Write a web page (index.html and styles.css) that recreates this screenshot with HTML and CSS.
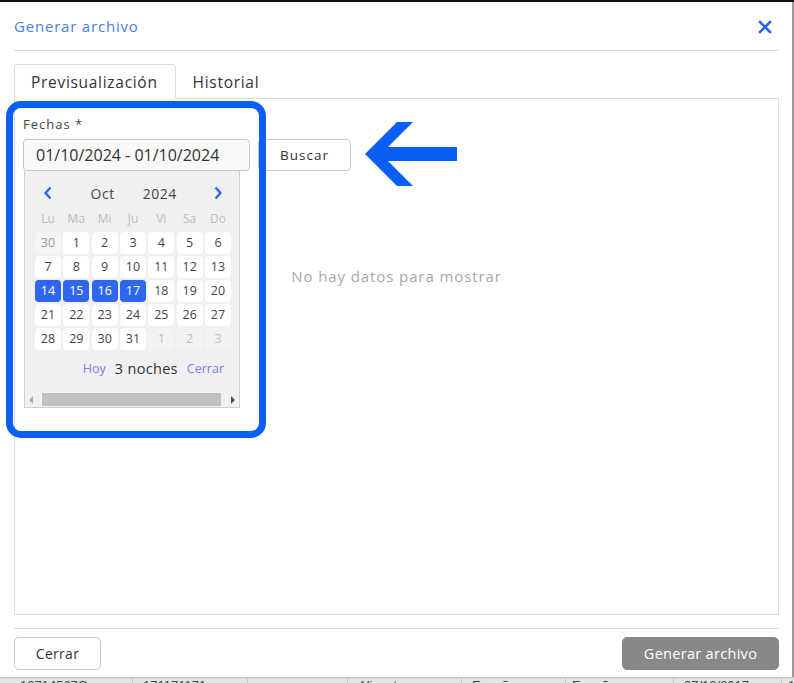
FILE: index.html
```html
<!DOCTYPE html>
<html lang="es">
<head>
<meta charset="utf-8">
<title>Generar archivo</title>
<link rel="stylesheet" href="styles.css">
</head>
<body>
<div class="topbar"></div>
<div class="modal">
  <div class="header">
    <span class="title">Generar archivo</span>
    <svg class="close" width="14" height="14" viewBox="0 0 14 14"><path d="M2 2 L12 12 M12 2 L2 12" stroke="#2a62ea" stroke-width="2.6" stroke-linecap="square"/></svg>
  </div>
  <div class="tabs">
    <div class="tab active">Previsualización</div>
    <div class="tab">Historial</div>
  </div>
  <div class="panel">
    <div class="form">
      <div class="field">
        <label class="label">Fechas *</label>
        <div class="row">
          <div class="input">01/10/2024 - 01/10/2024</div>
          <button class="btn">Buscar</button>
        </div>
        <div class="calendar">
          <div class="cal-head">
            <svg class="chev prev" width="10" height="14" viewBox="0 0 10 14"><path d="M7.5 1.5 L2.5 7 L7.5 12.5" fill="none" stroke="#2d66ee" stroke-width="2.4"/></svg>
            <span class="month">Oct</span>
            <span class="year">2024</span>
            <svg class="chev next" width="10" height="14" viewBox="0 0 10 14"><path d="M2.5 1.5 L7.5 7 L2.5 12.5" fill="none" stroke="#2d66ee" stroke-width="2.4"/></svg>
          </div>
          <div class="weekdays">
            <span>Lu</span><span>Ma</span><span>Mi</span><span>Ju</span><span>Vi</span><span>Sa</span><span>Do</span>
          </div>
          <div class="days">
            <span class="d prev-m">30</span><span class="d">1</span><span class="d">2</span><span class="d">3</span><span class="d">4</span><span class="d">5</span><span class="d">6</span>
            <span class="d">7</span><span class="d">8</span><span class="d">9</span><span class="d">10</span><span class="d">11</span><span class="d">12</span><span class="d">13</span>
            <span class="d sel">14</span><span class="d sel">15</span><span class="d sel">16</span><span class="d sel">17</span><span class="d">18</span><span class="d">19</span><span class="d">20</span>
            <span class="d">21</span><span class="d">22</span><span class="d">23</span><span class="d">24</span><span class="d">25</span><span class="d">26</span><span class="d">27</span>
            <span class="d">28</span><span class="d">29</span><span class="d">30</span><span class="d">31</span><span class="d next-m">1</span><span class="d next-m">2</span><span class="d next-m">3</span>
          </div>
          <div class="cal-foot">
            <span class="link">Hoy</span>
            <span class="nights">3 noches</span>
            <span class="link">Cerrar</span>
          </div>
          <div class="scrollbar">
            <svg class="sarrow" width="6" height="8" viewBox="0 0 6 8"><path d="M5 0 L1 4 L5 8 Z" fill="#a8a8a8"/></svg>
            <div class="thumb"></div>
            <svg class="sarrow" width="6" height="8" viewBox="0 0 6 8"><path d="M1 0 L5 4 L1 8 Z" fill="#505050"/></svg>
          </div>
        </div>
      </div>
    </div>
    <div class="empty">No hay datos para mostrar</div>
  </div>
  <div class="footer">
    <button class="btn btn-close">Cerrar</button>
    <button class="btn btn-primary">Generar archivo</button>
  </div>
  <div class="highlight"></div>
  <svg class="arrow" width="100" height="72" viewBox="0 0 100 72"><path d="M5 36 L37 4 L53 4 L28 29 L97 29 L97 43 L28 43 L53 68 L37 68 Z" fill="#0a5ff5"/></svg>
</div>
<div class="behind">
  <span class="c c1">12714567G</span>
  <span class="c c2">171171171</span>
  <span class="c c3"></span>
  <span class="c c4">Alicante</span>
  <span class="c c5">España</span>
  <span class="c c6">España</span>
  <span class="c c7">27/12/2017</span>
  <span class="c c8">1</span>
</div>
</body>
</html>
```
FILE: styles.css
```css
* { box-sizing: border-box; }
html, body { margin: 0; padding: 0; }
body {
  width: 794px;
  height: 683px;
  overflow: hidden;
  background: #fff;
  font-family: "Open Sans", "Liberation Sans", sans-serif;
  color: #333;
}
.topbar { height: 2px; background: #111; }
.modal {
  position: relative;
  height: 675px;
  padding: 0 13px 0 14px;
  background: #fff;
  border-right: 2px solid #9a9a9a;
}
.header {
  height: 49px;
  display: flex;
  align-items: center;
  justify-content: space-between;
  border-bottom: 1px solid #dcdcdc;
  padding-bottom: 1px;
}
.title { font-size: 15px; letter-spacing: 0.8px; color: #4c7cf0; }
.close { margin-right: 7px; margin-top: 2px; }
.tabs {
  margin-top: 13px;
  display: flex;
  margin-bottom: -1px;
  position: relative;
  z-index: 1;
}
.tab {
  height: 35px;
  padding: 0 17px 0 16px;
  display: flex;
  align-items: center;
  font-size: 15.5px;
  letter-spacing: 0.7px;
  color: #333;
  border: 1px solid transparent;
  border-radius: 4px 4px 0 0;
}
.tab.active {
  border-color: #dcdcdc;
  border-bottom-color: #fff;
  background: #fff;
}
.panel {
  height: 517px;
  border: 1px solid #dcdcdc;
  padding: 17px 8px 0;
}
.field { position: relative; }
.label { display: block; font-size: 13px; letter-spacing: 1px; line-height: 16px; color: #444; }
.row { display: flex; gap: 8px; margin-top: 7px; }
.input {
  width: 227px;
  height: 32px;
  border: 1px solid #c8c8c8;
  border-radius: 4px;
  background: #f9f9f9;
  padding-left: 12px;
  font-size: 16px;
  line-height: 30px;
  color: #333;
}
.btn {
  font-family: inherit;
  background: #fff;
  border: 1px solid #c8c8c8;
  border-radius: 4px;
  color: #333;
  cursor: pointer;
}
.row .btn { width: 93px; height: 32px; font-size: 13.5px; letter-spacing: 1px; }
.calendar {
  position: absolute;
  top: 55px;
  left: 1px;
  width: 216px;
  height: 237px;
  background: #f0f0f0;
  border: 1px solid #cfcfcf;
  border-top: none;
  z-index: 2;
}
.cal-head {
  margin-top: 12px;
  padding-left: 10px;
  height: 20px;
  display: grid;
  grid-template-columns: repeat(7, 26px);
  column-gap: 2.33px;
  align-items: center;
  font-size: 14px;
  letter-spacing: 0.5px;
  color: #444;
}
.chev { justify-self: center; grid-row: 1; }
.prev { grid-column: 1; }
.month { grid-column: 2 / 5; grid-row: 1; text-align: center; padding-right: 4px; }
.year { grid-column: 4 / 7; grid-row: 1; text-align: center; padding-right: 3px; }
.next { grid-column: 7; }
.weekdays, .days {
  padding-left: 10px;
  display: grid;
  grid-template-columns: repeat(7, 26px);
  column-gap: 2.33px;
}
.weekdays {
  margin-top: 8px;
  height: 16px;
  font-size: 12px;
  line-height: 16px;
  color: #bdbdbd;
  text-align: center;
}
.days { margin-top: 5px; row-gap: 2px; }
.d {
  height: 22px;
  background: #fff;
  border-radius: 4px;
  font-size: 12.5px;
  line-height: 22px;
  text-align: center;
  color: #444;
}
.d.prev-m { background: #f5f5f5; color: #9a9a9a; }
.d.next-m { background: #f3f3f3; color: #bdbdbd; }
.d.sel { background: #2e66f0; color: #fff; }
.cal-foot {
  margin-top: 8px;
  height: 20px;
  display: flex;
  justify-content: flex-end;
  align-items: center;
  gap: 9px;
  padding-right: 15px;
}
.link { font-size: 12.5px; color: #7c7cf2; }
.nights { font-size: 14.5px; letter-spacing: 0.3px; color: #333; }
.scrollbar {
  margin-top: 14px;
  height: 15px;
  display: flex;
  align-items: center;
  padding: 0 3px;
  background: #f1f1f1;
}
.sarrow { flex: none; }
.thumb {
  height: 13px;
  background: #c1c1c1;
  margin: 0 9px 0 8px;
  flex: 1;
}
.empty {
  margin-top: 95px;
  text-align: center;
  font-size: 15px;
  letter-spacing: 0.9px;
  line-height: 20px;
  color: #a8a8a8;
}
.footer {
  margin-top: 13px;
  border-top: 1px solid #dcdcdc;
  padding-top: 8px;
  display: flex;
  justify-content: space-between;
}
.btn-close { width: 87px; height: 33px; font-size: 14px; letter-spacing: 0.3px; border-radius: 5px; }
.btn-primary {
  width: 157px;
  height: 33px;
  font-size: 14.5px;
  letter-spacing: 0.3px;
  background: #888;
  border-color: #888;
  color: #fff;
  border-radius: 5px;
}
.highlight {
  position: absolute;
  left: 6px;
  top: 99px;
  width: 260px;
  height: 337px;
  border: 7px solid #0a5ff5;
  border-radius: 15px;
  z-index: 3;
  pointer-events: none;
}
.arrow {
  position: absolute;
  left: 360px;
  top: 116px;
  z-index: 3;
}
.behind {
  height: 6px;
  overflow: hidden;
  display: flex;
  background: linear-gradient(#bdbdbd, #e2e2e2 2px, #e6e6e6);
  font-size: 13px;
  line-height: 14px;
  color: #444;
  font-family: "Liberation Sans", sans-serif;
}
.c {
  padding-top: 2px;
  padding-left: 20px;
  border-right: 1px solid #c8c8c8;
  flex: none;
}
.c1 { width: 133px; }
.c2 { width: 115px; padding-left: 10px; }
.c3 { width: 100px; }
.c4 { width: 114px; padding-left: 10px; }
.c5 { width: 104px; padding-left: 10px; }
.c6 { width: 108px; padding-left: 6px; }
.c7 { width: 108px; padding-left: 10px; }
.c8 { width: 12px; padding-left: 6px; border: none; }
```
